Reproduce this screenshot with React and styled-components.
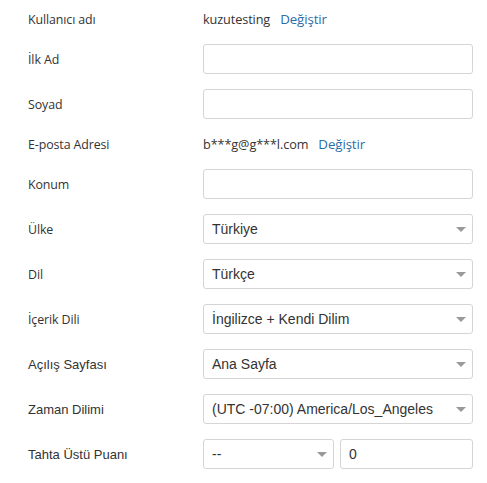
import React from "react";
import styled, { createGlobalStyle } from "styled-components";

const Global = createGlobalStyle`
  html, body { margin: 0; padding: 0; background: #fff; }
  body { font-family: "Open Sans", "Liberation Sans", sans-serif; color: #333; }
`;

const Form = styled.div`
  display: flex;
  flex-direction: column;
  gap: 15px;
  padding: 9px 15px 0 28px;
  width: 487px;
  box-sizing: border-box;
`;

const Row = styled.div`
  display: grid;
  grid-template-columns: 175px 270px;
  align-items: center;
  min-height: ${(p) => (p.$text ? "20px" : "30px")};
`;

const Label = styled.div`
  font-family: ${(p) => (p.$arial ? '"Liberation Sans", Arial, sans-serif' : '"Open Sans", "Liberation Sans", sans-serif')};
  font-size: ${(p) => (p.$arial ? "13px" : "12.4px")};
  color: #333;
  letter-spacing: ${(p) => (p.$arial ? "0" : "-0.1px")};
`;

const Value = styled.div`
  font-family: "Open Sans", "Liberation Sans", sans-serif;
  font-size: 12.7px;
  color: #333;
  letter-spacing: -0.1px;
  display: flex;
  align-items: baseline;
  gap: 10px;
`;

const Link = styled.a`
  color: #2c6ea8;
  text-decoration: none;
  font-size: 13.3px;
`;

const Input = styled.div`
  height: 30px;
  box-sizing: border-box;
  border: 1px solid #d5d5d5;
  border-radius: 3px;
  background: #fff;
  padding: 0 8px;
  display: flex;
  align-items: center;
  font-family: "Liberation Sans", Arial, sans-serif;
  font-size: 14px;
  color: #333;
  flex: 1;
  min-width: 0;
`;

const Select = styled(Input)`
  justify-content: space-between;
  padding-right: 6px;
`;

const Arrow = styled.span`
  width: 0;
  height: 0;
  border-left: 5px solid transparent;
  border-right: 5px solid transparent;
  border-top: 5px solid #999;
`;

const Pair = styled.div`
  display: flex;
  gap: 6px;
`;

const SelectBox = ({ value }) => (
  <Select>
    <span>{value}</span>
    <Arrow />
  </Select>
);

export default function App() {
  return (
    <>
      <Global />
      <Form>
        <Row $text>
          <Label>Kullanıcı adı</Label>
          <Value>
            <span>kuzutesting</span>
            <Link>Değiştir</Link>
          </Value>
        </Row>
        <Row>
          <Label>İlk Ad</Label>
          <Input />
        </Row>
        <Row>
          <Label>Soyad</Label>
          <Input />
        </Row>
        <Row $text>
          <Label>E-posta Adresi</Label>
          <Value>
            <span>b***g@g***l.com</span>
            <Link>Değiştir</Link>
          </Value>
        </Row>
        <Row>
          <Label>Konum</Label>
          <Input />
        </Row>
        <Row>
          <Label>Ülke</Label>
          <SelectBox value="Türkiye" />
        </Row>
        <Row>
          <Label>Dil</Label>
          <SelectBox value="Türkçe" />
        </Row>
        <Row>
          <Label>İçerik Dili</Label>
          <SelectBox value="İngilizce + Kendi Dilim" />
        </Row>
        <Row>
          <Label $arial>Açılış Sayfası</Label>
          <SelectBox value="Ana Sayfa" />
        </Row>
        <Row>
          <Label $arial>Zaman Dilimi</Label>
          <SelectBox value="(UTC -07:00) America/Los_Angeles" />
        </Row>
        <Row>
          <Label $arial>Tahta Üstü Puanı</Label>
          <Pair>
            <SelectBox value="--" />
            <Input>0</Input>
          </Pair>
        </Row>
      </Form>
    </>
  );
}
